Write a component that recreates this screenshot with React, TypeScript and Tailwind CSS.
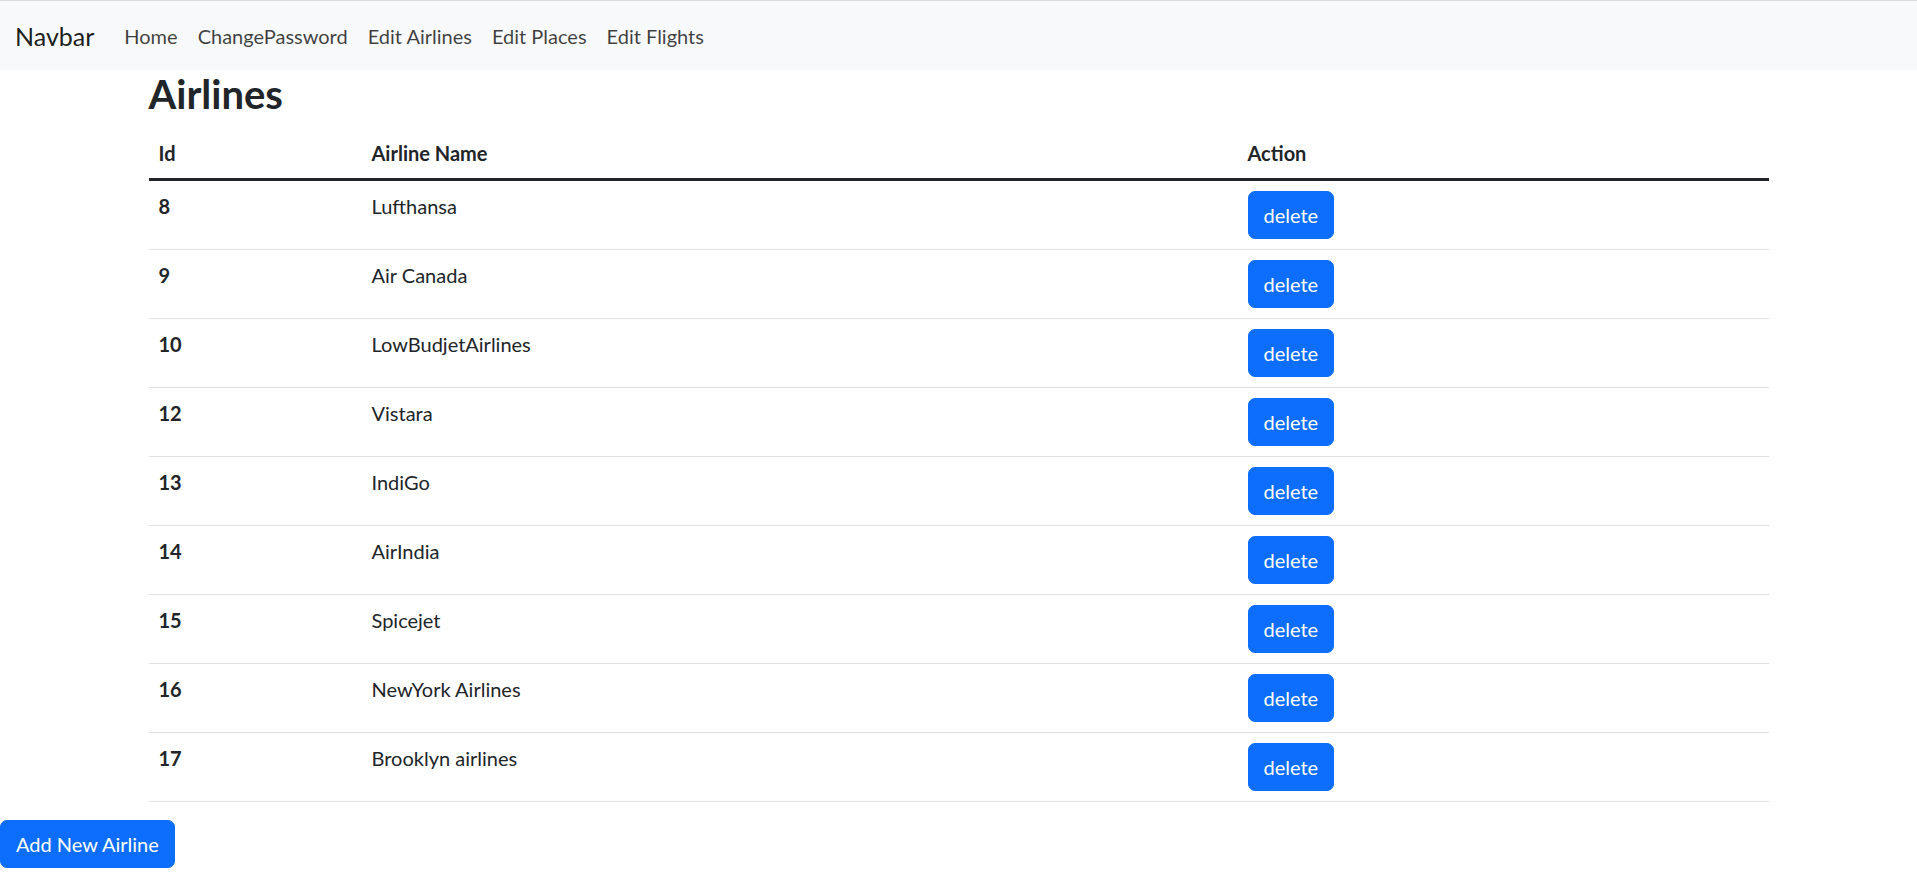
import React from "react";

const rows: [number, string][] = [
  [8, "Lufthansa"],
  [9, "Air Canada"],
  [10, "LowBudjetAirlines"],
  [12, "Vistara"],
  [13, "IndiGo"],
  [14, "AirIndia"],
  [15, "Spicejet"],
  [16, "NewYork Airlines"],
  [17, "Brooklyn airlines"],
];

export default function App() {
  return (
    <div
      className="min-h-screen bg-white text-[#212529] text-[20px] leading-[30px]"
      style={{ fontFamily: 'Lato, "Noto Sans", sans-serif' }}
    >
      <nav className="h-[70px] border-t border-[#dcdcdc] bg-[#f8f9fa] flex items-center px-[15px]">
        <span className="text-[25px] leading-[38px] text-black/90 mr-[20px]">Navbar</span>
        <ul className="flex items-center">
          {["Home", "ChangePassword", "Edit Airlines", "Edit Places", "Edit Flights"].map((t) => (
            <li key={t} className="px-[10px] py-[10px] text-black/75">
              {t}
            </li>
          ))}
        </ul>
      </nav>

      <div className="w-[1650px] mx-auto px-[15px]">
        <h2 className="text-[40px] leading-[48px] font-bold mb-[10px]">Airlines</h2>
        <table className="w-full border-collapse align-top mb-[18px]">
          <thead>
            <tr className="border-b-[3px] border-[#212529]">
              <th className="w-[213px] text-left font-bold px-[10px] py-[10px] align-top">Id</th>
              <th className="w-[876px] text-left font-bold px-[10px] py-[10px] align-top">Airline Name</th>
              <th className="text-left font-bold px-[10px] py-[10px] align-top">Action</th>
            </tr>
          </thead>
          <tbody>
            {rows.map(([id, name]) => (
              <tr key={id} className="border-b border-[#dee2e6]">
                <th className="text-left font-bold px-[10px] py-[10px] align-top">{id}</th>
                <td className="px-[10px] py-[10px] align-top">{name}</td>
                <td className="px-[10px] py-[10px] align-top">
                  <button className="bg-[#0d6efd] text-white rounded-[7px] px-[15px] py-[8px] leading-[30px] text-[20px] border border-[#0d6efd]">
                    delete
                  </button>
                </td>
              </tr>
            ))}
          </tbody>
        </table>
      </div>

      <button className="bg-[#0d6efd] text-white rounded-[7px] px-[15px] py-[8px] leading-[30px] text-[20px] border border-[#0d6efd]">
        Add New Airline
      </button>
    </div>
  );
}
